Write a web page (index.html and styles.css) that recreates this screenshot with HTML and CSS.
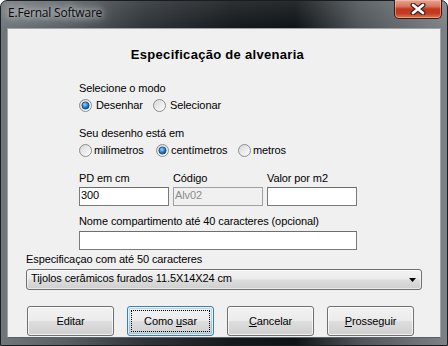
FILE: index.html
```html
<!DOCTYPE html>
<html lang="pt">
<head>
<meta charset="utf-8">
<title>E.Fernal Software</title>
<link rel="stylesheet" href="styles.css">
</head>
<body>
<div class="window">
  <div class="titlebar">
    <span class="title">E.Fernal Software</span>
    <div class="close">
      <svg width="16" height="12" viewBox="0 0 16 12">
        <path d="M3 2 L13 10 M13 2 L3 10" stroke="#3b2a27" stroke-width="5" stroke-linecap="round"/>
        <path d="M3 2 L13 10 M13 2 L3 10" stroke="#ffffff" stroke-width="2.6" stroke-linecap="round"/>
      </svg>
    </div>
  </div>
  <div class="client">
    <h1 class="heading">Especificação de alvenaria</h1>
    <div class="form">
      <div class="label">Selecione o modo</div>
      <div class="radios">
        <label class="radio w74">
          <svg class="rb" width="13" height="13" viewBox="0 0 13 13">
            <defs>
              <linearGradient id="rbfill" x1="0" y1="0" x2="1" y2="1">
                <stop offset="0" stop-color="#d6d6d6"/>
                <stop offset="1" stop-color="#ffffff"/>
              </linearGradient>
              <radialGradient id="rbdot" cx="0.4" cy="0.35" r="0.7">
                <stop offset="0" stop-color="#8fd3ff"/>
                <stop offset="0.55" stop-color="#2a84d2"/>
                <stop offset="1" stop-color="#0c3d7a"/>
              </radialGradient>
            </defs>
            <circle cx="6.5" cy="6.5" r="6" fill="url(#rbfill)" stroke="#8d8d8d"/>
            <circle cx="6.5" cy="6.5" r="3.6" fill="url(#rbdot)" stroke="#14427a" stroke-width="0.8"/>
          </svg>
          <span>Desenhar</span>
        </label>
        <label class="radio">
          <svg class="rb" width="13" height="13" viewBox="0 0 13 13">
            <circle cx="6.5" cy="6.5" r="6" fill="url(#rbfill)" stroke="#8d8d8d"/>
          </svg>
          <span>Selecionar</span>
        </label>
      </div>
      <div class="label mt15">Seu desenho está em</div>
      <div class="radios gap-t">
        <label class="radio w77">
          <svg class="rb" width="13" height="13" viewBox="0 0 13 13">
            <circle cx="6.5" cy="6.5" r="6" fill="url(#rbfill)" stroke="#8d8d8d"/>
          </svg>
          <span>milímetros</span>
        </label>
        <label class="radio w82">
          <svg class="rb" width="13" height="13" viewBox="0 0 13 13">
            <circle cx="6.5" cy="6.5" r="6" fill="url(#rbfill)" stroke="#8d8d8d"/>
            <circle cx="6.5" cy="6.5" r="3.6" fill="url(#rbdot)" stroke="#14427a" stroke-width="0.8"/>
          </svg>
          <span>centímetros</span>
        </label>
        <label class="radio">
          <svg class="rb" width="13" height="13" viewBox="0 0 13 13">
            <circle cx="6.5" cy="6.5" r="6" fill="url(#rbfill)" stroke="#8d8d8d"/>
          </svg>
          <span>metros</span>
        </label>
      </div>
      <div class="fields">
        <div class="field">
          <div class="label">PD em cm</div>
          <div class="input">300</div>
        </div>
        <div class="field">
          <div class="label">Código</div>
          <div class="input disabled">Alv02</div>
        </div>
        <div class="field">
          <div class="label">Valor por m2</div>
          <div class="input"></div>
        </div>
      </div>
      <div class="label mt9">Nome compartimento até 40 caracteres (opcional)</div>
      <div class="input wide"></div>
    </div>
    <div class="spec">
      <div class="label">Especificaçao com até 50 caracteres</div>
      <div class="combo">
        <span>Tijolos cerâmicos furados 11.5X14X24 cm</span>
        <svg width="7" height="4" viewBox="0 0 7 4"><path d="M0 0 H7 L3.5 4 Z" fill="#000"/></svg>
      </div>
    </div>
    <div class="buttons">
      <div class="btn"><span>Editar</span></div>
      <div class="btn focused"><div class="focusrect"><span>Como <u>u</u>sar</span></div></div>
      <div class="btn"><span><u>C</u>ancelar</span></div>
      <div class="btn"><span><u>P</u>rosseguir</span></div>
    </div>
  </div>
</div>
</body>
</html>
```

FILE: styles.css
```css
html, body {
  margin: 0;
  padding: 0;
}

body {
  width: 448px;
  height: 346px;
  overflow: hidden;
  background: #ffffff;
}

.window {
  box-sizing: border-box;
  width: 448px;
  height: 346px;
  border: 1px solid #1a1d20;
  border-radius: 7px 7px 0 0;
  background:
    linear-gradient(180deg, rgba(255,255,255,0.10) 0, rgba(255,255,255,0) 28px),
    linear-gradient(90deg, #70777c 0%, #5a6166 14%, #2e3438 32%, #15191c 52%, #101315 66%, #4d5357 80%, #7d8387 100%);
  display: flex;
  flex-direction: column;
  font-family: "Liberation Sans", Arial, sans-serif;
}

.titlebar {
  height: 27px;
  display: flex;
  justify-content: space-between;
  align-items: flex-start;
  padding-left: 7px;
}

.title {
  margin-top: 4px;
  font-family: "Open Sans", "Noto Sans", sans-serif;
  font-size: 12px;
  line-height: 16px;
  letter-spacing: -0.2px;
  color: #0a0a0a;
  text-shadow: 0 0 6px rgba(255,255,255,0.9), 0 0 12px rgba(255,255,255,0.7), 0 0 18px rgba(255,255,255,0.5);
}

.close {
  width: 48px;
  height: 19px;
  margin-right: 5px;
  margin-top: -1px;
  box-sizing: border-box;
  border: 1px solid #3a1b16;
  border-top: none;
  border-radius: 0 0 5px 5px;
  background: linear-gradient(180deg, #e8a593 0%, #d7775f 35%, #c2361d 50%, #c23d22 75%, #e0754f 100%);
  box-shadow: inset 0 0 0 1px rgba(255,210,190,0.45);
  display: flex;
  align-items: center;
  justify-content: center;
}

.client {
  box-sizing: border-box;
  margin-left: 6px;
  width: 434px;
  height: 310px;
  border: 1px solid #9fa4a8;
  border-bottom-color: #5b6064;
  background: #f0f0f0;
  padding: 18px 0 0 18px;
  font-size: 11px;
  line-height: 13px;
  color: #000;
}

.heading {
  margin: 0;
  width: 383px;
  text-align: center;
  font-size: 13px;
  line-height: 16px;
  font-weight: bold;
  letter-spacing: 0.3px;
}

.form {
  margin-left: 53px;
  margin-top: 19px;
}

.label {
  font-size: 11px;
  line-height: 13px;
  height: 13px;
  white-space: nowrap;
  letter-spacing: -0.1px;
}

.mt15 { margin-top: 15px; }
.mt9 { margin-top: 9px; }

.radios {
  margin-top: 4px;
  display: flex;
  height: 13px;
}

.radio {
  display: flex;
  align-items: center;
  gap: 4px;
  letter-spacing: -0.1px;
  white-space: nowrap;
}

.gap-t .radio { gap: 2px; }

.w74 { width: 74px; }
.w77 { width: 77px; }
.w82 { width: 82px; }

.rb { display: block; flex: none; }

.fields {
  margin-top: 15px;
  display: grid;
  grid-template-columns: 90px 90px 90px;
  column-gap: 4px;
}

.field .label { margin-bottom: 2px; }

.input {
  box-sizing: border-box;
  height: 19px;
  border: 1px solid #7a7a7a;
  border-top-color: #6e6e6e;
  background: #ffffff;
  padding: 1px 0 0 1px;
  font-size: 11px;
  line-height: 13px;
  letter-spacing: -0.1px;
}

.input.disabled {
  background: #f0f0f0;
  border-color: #a0a0a0;
  color: #8b8b8b;
}

.input.wide {
  width: 278px;
  margin-top: 3px;
}

.spec {
  margin-top: 3px;
}

.combo {
  box-sizing: border-box;
  margin-top: 3px;
  width: 396px;
  height: 21px;
  border: 1px solid #707070;
  border-radius: 3px;
  background: linear-gradient(180deg, #f3f3f3 0%, #ebebeb 48%, #dddddd 52%, #cfcfcf 100%);
  box-shadow: inset 0 0 0 1px rgba(255,255,255,0.55);
  display: flex;
  align-items: flex-start;
  justify-content: space-between;
  padding: 2px 5px 0 4px;
  letter-spacing: -0.1px;
}

.combo svg {
  margin-top: 6px;
  display: block;
}

.buttons {
  margin-top: 16px;
  margin-left: 1px;
  display: flex;
  gap: 13px;
}

.btn {
  box-sizing: border-box;
  width: 87px;
  height: 30px;
  border: 1px solid #707070;
  border-radius: 3px;
  background: linear-gradient(180deg, #f2f2f2 0%, #ebebeb 48%, #dddddd 52%, #cfcfcf 100%);
  box-shadow: inset 0 0 0 1px rgba(255,255,255,0.7);
  display: flex;
  align-items: center;
  justify-content: center;
  letter-spacing: -0.1px;
  padding-top: 1px;
}

.btn.focused {
  border-color: #3c7fb1;
  box-shadow: inset 0 0 0 1px rgba(255,255,255,0.7), inset 0 0 0 2px rgba(72,167,231,0.35);
  padding: 3px;
  align-items: stretch;
}

.focusrect {
  flex: 1;
  border: 1px dotted #000;
  display: flex;
  align-items: center;
  justify-content: center;
  padding-top: 1px;
}

u {
  text-decoration-thickness: 1px;
  text-underline-offset: 1px;
}
```
